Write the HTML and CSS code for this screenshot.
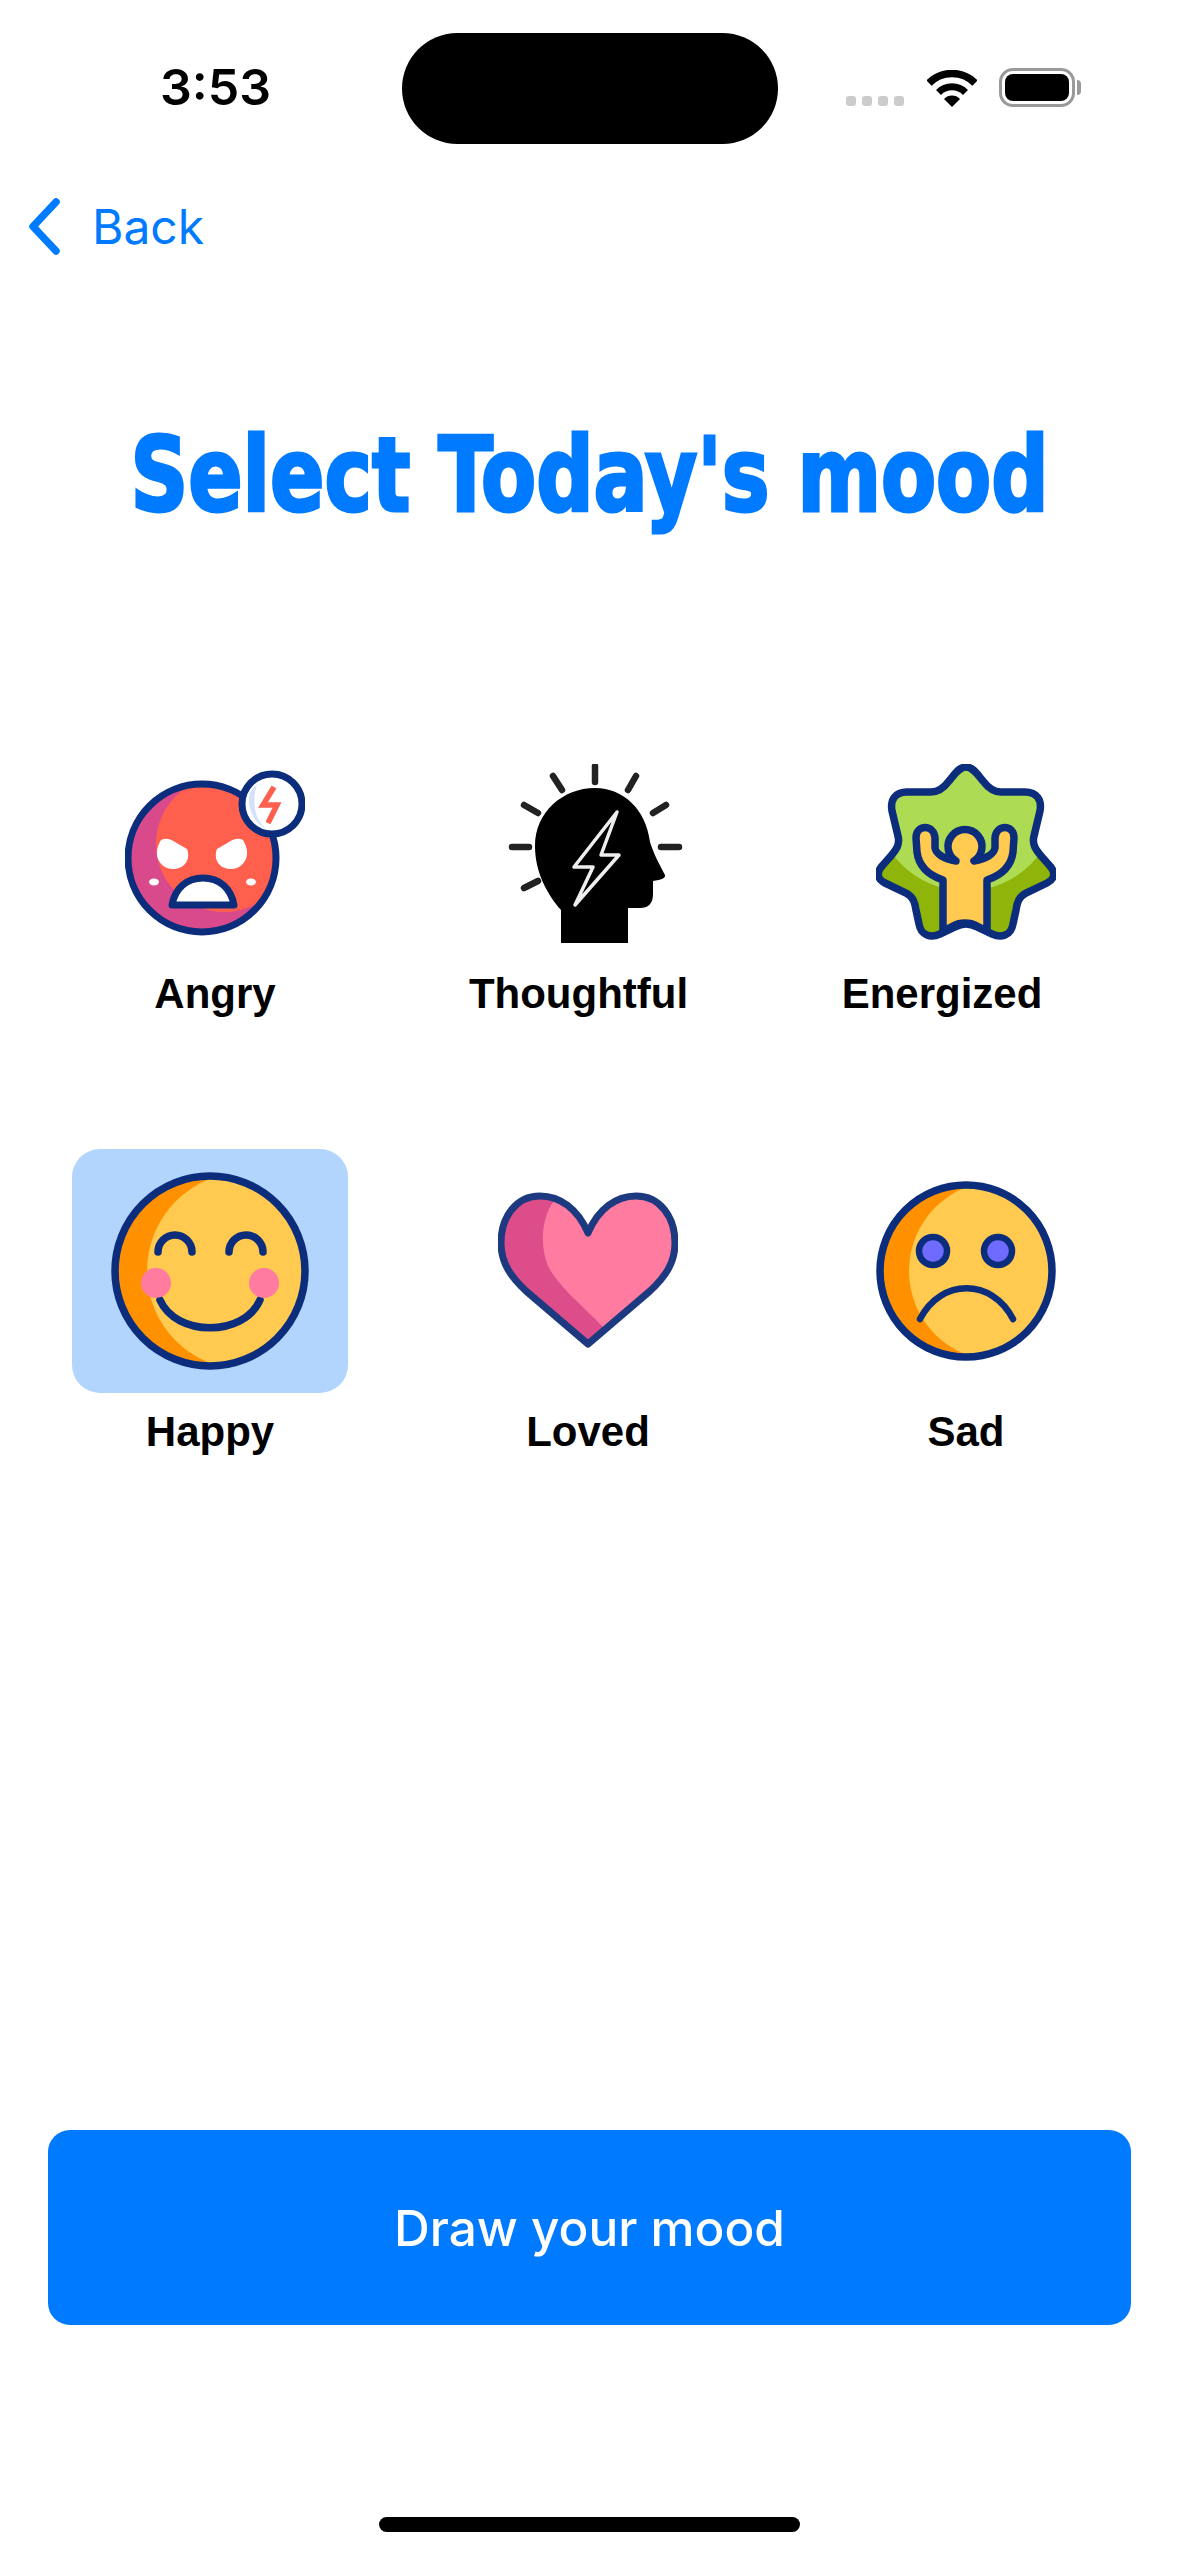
FILE: index.html
```html
<!DOCTYPE html>
<html lang="en">
<head>
    <meta charset="UTF-8">
    <meta name="viewport" content="width=device-width, initial-scale=1.0">
    <title>Select Today's mood</title>
    <link rel="stylesheet" href="styles.css">
</head>
<body>
    <header class="status-bar">
        <div class="time">3:53</div>
        <div class="island"></div>
        <div class="status-icons">
            <div class="signal"><span></span><span></span><span></span><span></span></div>
            <svg class="wifi" viewBox="0 0 50 37">
                <path d="M2 13A32.5 32.5 0 0 1 48 13" fill="none" stroke="#000" stroke-width="7.5"/>
                <path d="M11.5 22.5A19 19 0 0 1 38.5 22.5" fill="none" stroke="#000" stroke-width="7"/>
                <path d="M17 29A11 11 0 0 1 33 29L25 37Z" fill="#000"/>
            </svg>
            <div class="battery"><div class="battery-level"></div></div>
            <div class="battery-cap"></div>
        </div>
    </header>

    <nav class="nav">
        <a class="back" href="#">
            <svg class="chevron" viewBox="0 0 32 57">
                <path d="M28 4L5 28.500L28 53" fill="none" stroke="#007aff" stroke-width="7.500" stroke-linecap="round" stroke-linejoin="round"/>
            </svg>
            <span>Back</span>
        </a>
    </nav>

    <main>
        <h1 class="title">Select Today's mood</h1>

        <section class="mood-row mood-row-top">
            <div class="mood">
                <div class="tile">
                    <svg class="icon" viewBox="0 0 180 180">
                        <defs><clipPath id="angryFace"><circle cx="77" cy="94" r="74"/></clipPath></defs>
                        <circle cx="77" cy="94" r="74" fill="#d94a8c"/>
                        <circle cx="99" cy="80" r="68" fill="#ff5f4d" clip-path="url(#angryFace)"/>
                        <circle cx="77" cy="94" r="74" fill="none" stroke="#0b2d7b" stroke-width="7"/>
                        <path d="M36 76C40 74 44 74 50 78L62 85C66 95 60 105 48 105C36 105 26 92 36 76Z" fill="#fff"/>
                        <path d="M118 76C114 74 110 74 104 78L92 85C88 95 94 105 106 105C118 105 128 92 118 76Z" fill="#fff"/>
                        <ellipse cx="29" cy="118" rx="5" ry="3.500" fill="#fff"/>
                        <ellipse cx="126" cy="118" rx="5" ry="3.500" fill="#fff"/>
                        <path d="M47 141C50 124 62 114 78 114C94 114 106 124 109 141Z" fill="#fff" stroke="#0b2d7b" stroke-width="7" stroke-linejoin="round"/>
                        <circle cx="147" cy="40" r="30" fill="#fff" stroke="#0b2d7b" stroke-width="7"/>
                        <path d="M125 28C121 42 128 58 142 66C131 57 126 42 132 20Z" fill="#d5e0fb"/>
                        <path d="M149 23L138 41H152L143 59" fill="none" stroke="#ff5f4d" stroke-width="5.500"/>
                    </svg>
                </div>
                <div class="mood-label">Angry</div>
            </div>
            <div class="mood">
                <div class="tile">
                    <svg class="icon icon-thoughtful" viewBox="0 0 180 180">
                        <path d="M56 179V146C42 130 30 108 30 82C30 48 58 24 90 24C118 24 141 45 145 78C148 88 154 100 160 111C161 114 156 116 148 117V130C148 140 143 144 135 144H123V179Z" fill="#000"/>
                        <path d="M90 2V18M48 12L57 26M131 12L123 26M19 41L33 49M161 41L148 49M7 83H24M156 83H174M19 124L33 117" fill="none" stroke="#222" stroke-width="6.500" stroke-linecap="round"/>
                        <path d="M112 48L69 103H88L70 141L114 91H96Z" fill="none" stroke="#eee" stroke-width="3.500" stroke-linejoin="round"/>
                    </svg>
                </div>
                <div class="mood-label">Thoughtful</div>
            </div>
            <div class="mood">
                <div class="tile">
                    <svg class="icon icon-energized" viewBox="0 0 180 180">
                        <defs><clipPath id="star"><path d="M90 3C97 3 101 10 107 17C113 25 118 28 125 28H149C161 28 166 36 164 47L158 72C156 80 159 85 166 93L173 101C180 108 179 115 171 119L150 129C143 133 141 138 140 146L137 160C135 172 125 174 116 170L101 163C94 159 86 159 79 163L64 170C55 174 45 172 43 160L40 146C39 138 37 133 30 129L9 119C1 115 0 108 7 101L14 93C21 85 24 80 22 72L16 47C14 36 19 28 31 28H55C62 28 67 25 73 17C79 10 83 3 90 3Z"/></clipPath></defs>
                        <rect width="180" height="180" fill="#8fb40a" clip-path="url(#star)"/>
                        <circle cx="90" cy="35" r="92" fill="#aedb54" clip-path="url(#star)"/>
                        <path d="M90 3C97 3 101 10 107 17C113 25 118 28 125 28H149C161 28 166 36 164 47L158 72C156 80 159 85 166 93L173 101C180 108 179 115 171 119L150 129C143 133 141 138 140 146L137 160C135 172 125 174 116 170L101 163C94 159 86 159 79 163L64 170C55 174 45 172 43 160L40 146C39 138 37 133 30 129L9 119C1 115 0 108 7 101L14 93C21 85 24 80 22 72L16 47C14 36 19 28 31 28H55C62 28 67 25 73 17C79 10 83 3 90 3Z" fill="none" stroke="#0b2d7b" stroke-width="7.500"/>
                        <path d="M67 167V116C55 112 43 104 41 88L40 74C40 60 58 60 59 74V84C60 90 68 95 80 97A17 17 0 1 1 98 97C110 95 118 90 119 84V74C120 60 138 60 138 74L137 88C135 104 123 112 111 116V167L101 162C94 158 84 158 77 162Z" fill="#ffca4f" stroke="#0b2d7b" stroke-width="7.500" stroke-linejoin="round"/>
                    </svg>
                </div>
                <div class="mood-label">Energized</div>
            </div>
        </section>

        <section class="mood-row">
            <div class="mood">
                <div class="tile tile-selected">
                    <svg class="icon icon-happy" viewBox="0 0 198 198">
                        <defs><clipPath id="happyFace"><circle cx="99" cy="99" r="95"/></clipPath></defs>
                        <circle cx="99" cy="99" r="95" fill="#ff9100"/>
                        <circle cx="135" cy="99" r="99" fill="#ffca4f" clip-path="url(#happyFace)"/>
                        <circle cx="99" cy="99" r="95" fill="none" stroke="#0b2d7b" stroke-width="7.500"/>
                        <path d="M47 80A17 17 0 0 1 81 80M118 80A17 17 0 0 1 152 80M49 128C65 165 133 165 149 128" fill="none" stroke="#0b2d7b" stroke-width="7.500" stroke-linecap="round"/>
                        <circle cx="45" cy="111" r="15" fill="#ff7ba0"/>
                        <circle cx="153" cy="111" r="15" fill="#ff7ba0"/>
                    </svg>
                </div>
                <div class="mood-label">Happy</div>
            </div>
            <div class="mood">
                <div class="tile">
                    <svg class="icon" viewBox="0 0 180 180">
                        <defs><clipPath id="heart"><path d="M90 52C80 28 62 15 42 15C18 15 3 36 3 62C3 82 13 96 28 110L90 163L152 110C167 96 177 82 177 62C177 36 162 15 138 15C118 15 100 28 90 52Z"/></clipPath></defs>
                        <rect width="180" height="180" fill="#dd4d89" clip-path="url(#heart)"/>
                        <path d="M60 15C45 30 40 60 50 85C60 105 85 125 105 146H180V0H60Z" fill="#ff7ba0" clip-path="url(#heart)"/>
                        <path d="M90 52C80 28 62 15 42 15C18 15 3 36 3 62C3 82 13 96 28 110L90 163L152 110C167 96 177 82 177 62C177 36 162 15 138 15C118 15 100 28 90 52Z" fill="none" stroke="#1d3a80" stroke-width="7" stroke-linejoin="round"/>
                    </svg>
                </div>
                <div class="mood-label">Loved</div>
            </div>
            <div class="mood">
                <div class="tile">
                    <svg class="icon" viewBox="0 0 180 180">
                        <defs><clipPath id="sadFace"><circle cx="90" cy="90" r="86"/></clipPath></defs>
                        <circle cx="90" cy="90" r="86" fill="#ff9100"/>
                        <circle cx="123" cy="90" r="90" fill="#ffca4f" clip-path="url(#sadFace)"/>
                        <circle cx="90" cy="90" r="86" fill="none" stroke="#0b2d7b" stroke-width="7.500"/>
                        <circle cx="57" cy="70" r="14" fill="#6f6bff" stroke="#0b2d7b" stroke-width="6.500"/>
                        <circle cx="122" cy="70" r="14" fill="#6f6bff" stroke="#0b2d7b" stroke-width="6.500"/>
                        <path d="M44 138C65 97 116 97 137 138" fill="none" stroke="#0b2d7b" stroke-width="6.500" stroke-linecap="round"/>
                    </svg>
                </div>
                <div class="mood-label">Sad</div>
            </div>
        </section>

        <button class="draw-button" type="button">Draw your mood</button>
    </main>

    <div class="home-bar"></div>
</body>
</html>
```

FILE: styles.css
```css
body {
    margin: 0;
    padding: 0;
    width: 1179px;
    height: 2556px;
    overflow: hidden;
    background-color: #fff;
    font-family: "Liberation Sans", Arial, sans-serif;
    color: #000;
}

/* status bar */
.status-bar {
    display: grid;
    grid-template-columns: 402px 376px 1fr;
    padding-top: 33px;
    height: 111px;
}
.time {
    padding: 29px 0 0 160px;
    font-family: Inter, sans-serif;
    font-weight: 600;
    font-size: 50px;
    line-height: 50px;
}
.island {
    background-color: #000;
    border-radius: 56px;
    height: 111px;
}
.status-icons {
    display: flex;
    align-items: flex-end;
    padding: 35px 0 37px 68px;
}
.signal {
    display: flex;
    gap: 6px;
    margin-bottom: 1px;
}
.signal span {
    width: 10px;
    height: 10px;
    border-radius: 3px;
    background-color: #ccc;
}
.wifi {
    width: 50px;
    height: 37px;
    margin: 0 22px 0 23px;
}
.battery {
    box-sizing: border-box;
    width: 76px;
    height: 39px;
    padding: 3px;
    border: 3px solid #999;
    border-radius: 14px;
}
.battery-level {
    height: 100%;
    background-color: #000;
    border-radius: 8px;
}
.battery-cap {
    width: 4px;
    height: 15px;
    margin: 0 0 12px 2px;
    background-color: #999;
    border-radius: 0 8px 8px 0;
}

/* back link */
.nav {
    margin-top: 54px;
    padding-left: 28px;
}
.back {
    display: flex;
    align-items: center;
    gap: 32px;
    color: #007aff;
    text-decoration: none;
    font-family: Inter, sans-serif;
    font-size: 48px;
    line-height: 57px;
}
.chevron {
    width: 32px;
    height: 57px;
}

/* title */
.title {
    margin: 160px 0 0;
    text-align: center;
    color: #007aff;
    font-family: "DejaVu Sans Condensed", "DejaVu Sans", sans-serif;
    font-weight: 700;
    font-size: 104px;
    line-height: 120px;
    -webkit-text-stroke: 3px #007aff;
    transform: scaleX(0.857);
}

/* mood grid */
.mood-row {
    display: grid;
    grid-template-columns: repeat(3, 276px);
    column-gap: 102px;
    padding-left: 72px;
    margin-top: 131px;
}
.mood-row-top {
    column-gap: 87.5px;
    padding-left: 77px;
    margin-top: 229px;
}
.mood {
    display: flex;
    flex-direction: column;
    align-items: center;
    gap: 15px;
}
.mood-row-top .mood {
    gap: 26px;
}
.tile {
    display: flex;
    align-items: center;
    justify-content: center;
    width: 276px;
    height: 244px;
    border-radius: 28px;
}
.mood-row-top .tile {
    height: 180px;
}
.tile-selected {
    background-color: #b1d5fd;
}
.icon {
    width: 180px;
    height: 180px;
    filter: blur(0.7px);
}
.icon-happy {
    width: 198px;
    height: 198px;
}
.icon-thoughtful {
    margin-left: 32px;
}
.icon-energized {
    margin-left: 48px;
}
.mood-label {
    font-weight: 700;
    font-size: 42px;
    line-height: 48px;
}

/* bottom */
.draw-button {
    display: block;
    width: 1083px;
    height: 195px;
    margin: 674px 0 0 48px;
    padding: 0;
    border: none;
    border-radius: 22px;
    background-color: #007aff;
    color: #fff;
    font-family: Inter, sans-serif;
    font-weight: 500;
    font-size: 49.500px;
}
.home-bar {
    width: 421px;
    height: 15px;
    margin: 192px auto 0;
    background-color: #000;
    border-radius: 8px;
}
```
